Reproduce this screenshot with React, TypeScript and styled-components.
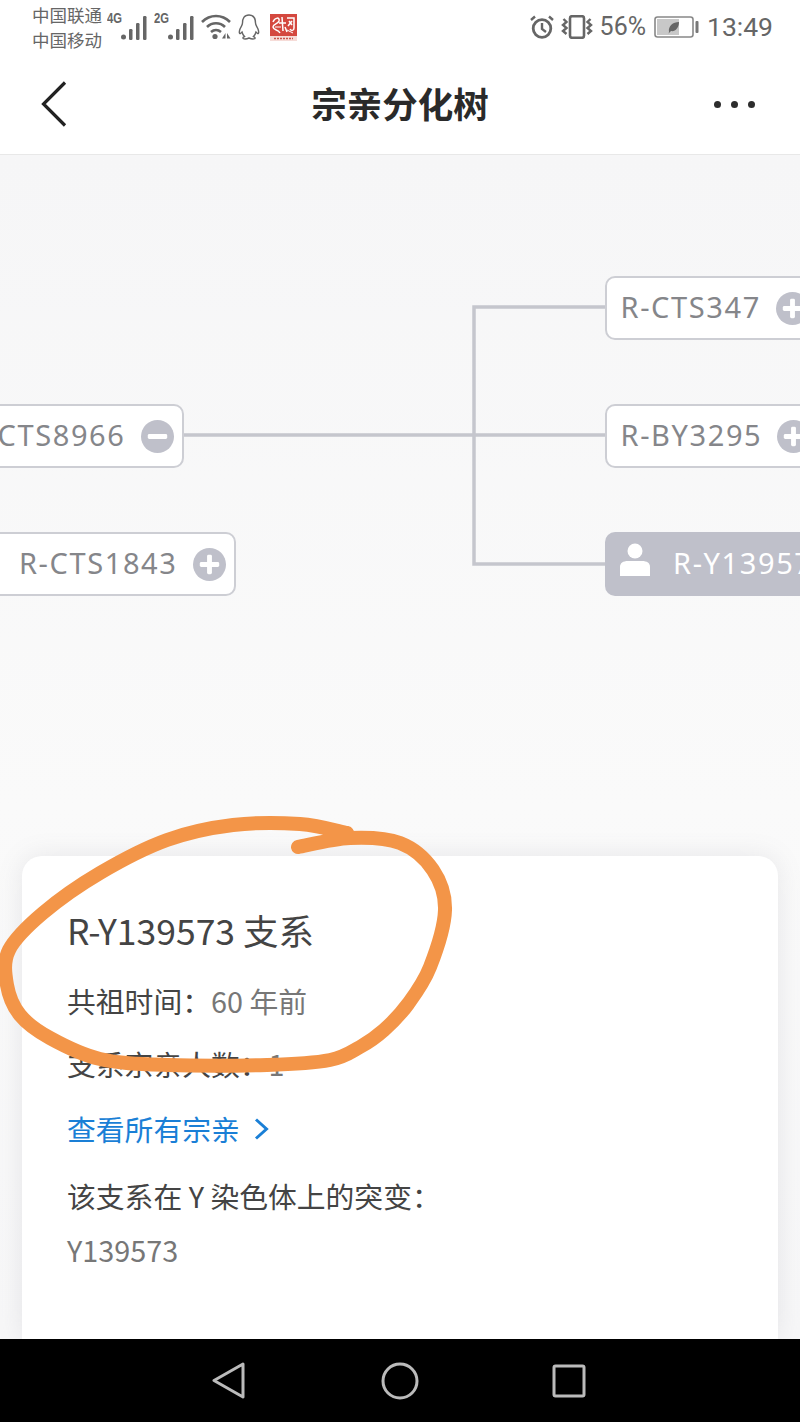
import styled, { createGlobalStyle } from 'styled-components'

const GlobalStyle = createGlobalStyle`
    html, body {
        margin: 0;
        padding: 0;
        background: #fff;
    }
`

const LINE = '#c5c6cd'
const CJK = `"Noto Sans CJK SC", "Noto Sans", sans-serif`

// the hand drawn ring, traced from the start of the stroke round to its end
const RING: [number, number][] = [
    [298, 847], [350, 838], [400, 843], [433, 870], [445, 910], [430, 967], [408, 1004], [384, 1030],
    [360, 1047], [330, 1060], [267, 1065], [167, 1065], [100, 1059], [50, 1038], [20, 1015], [7, 985], [9, 950],
    [43, 913], [100, 873], [167, 840], [233, 825], [300, 824], [347, 833],
]

const smoothPath = (pts: [number, number][]) => {
    let d = `M${pts[0][0]} ${pts[0][1]}`
    for (let i = 0; i < pts.length - 1; i++) {
        const p0 = pts[Math.max(i - 1, 0)]
        const p1 = pts[i]
        const p2 = pts[i + 1]
        const p3 = pts[Math.min(i + 2, pts.length - 1)]
        const c1x = p1[0] + (p2[0] - p0[0]) / 6
        const c1y = p1[1] + (p2[1] - p0[1]) / 6
        const c2x = p2[0] - (p3[0] - p1[0]) / 6
        const c2y = p2[1] - (p3[1] - p1[1]) / 6
        d += ` C${c1x} ${c1y} ${c2x} ${c2y} ${p2[0]} ${p2[1]}`
    }
    return d
}

function Signal({ label }: { label: string }) {
    return (
        <SignalBox>
            <SignalLabel>{label}</SignalLabel>
            <svg width="26" height="25" viewBox="0 0 26 25">
                <circle cx="2.5" cy="22" r="2.5" fill="#666" />
                <rect x="8" y="14" width="3.5" height="11" rx="1.2" fill="#666" />
                <rect x="15" y="8" width="3.5" height="17" rx="1.2" fill="#666" />
                <rect x="22" y="1" width="3.5" height="24" rx="1.2" fill="#666" />
            </svg>
        </SignalBox>
    )
}

function WifiIcon() {
    return (
        <svg width="30" height="26" viewBox="0 0 30 26" fill="none" stroke="#666" strokeWidth="2.6">
            <path d="M1 8 C9 0 21 0 29 8" />
            <path d="M6 13 C11 8 19 8 24 13" />
            <path d="M10 18 C13 15.5 17 15.5 20 18" />
            <circle cx="14" cy="22.5" r="2.6" fill="#666" stroke="none" />
            <path d="M21 24.5 L24.5 19 V24.5 Z" fill="#666" stroke="none" />
            <path d="M26 19 L29.5 24.5 H26 Z" fill="#666" stroke="none" />
        </svg>
    )
}

function QQIcon() {
    return (
        <svg width="22" height="26" viewBox="0 0 22 26" fill="none" stroke="#666" strokeWidth="1.4">
            <path d="M11 1 C6 1 4.5 5 4.5 9 C4.5 11 3 12.5 2 15 C1 18 1 20 2.5 19.5 L4 18 C4.5 20 5.5 21.5 6.5 22.5 C4 23.5 4.5 25 7 25 C9 25 10 24.5 11 24 C12 24.5 13 25 15 25 C17.5 25 18 23.5 15.5 22.5 C16.5 21.5 17.5 20 18 18 L19.5 19.5 C21 20 21 18 20 15 C19 12.5 17.5 11 17.5 9 C17.5 5 16 1 11 1 Z" />
        </svg>
    )
}

function AppLogo() {
    return (
        <svg width="27" height="27" viewBox="0 0 27 27">
            <rect width="27" height="22" fill="#d4483f" />
            <rect y="22" width="27" height="5" fill="#f6dcd8" />
            <g fill="none" stroke="#fff" strokeWidth="1.5">
                <path d="M3 8 C5 3 10 3 9 7 C8 10 3 10 3 13 C4 17 8 15 10 19" />
                <path d="M12 3 L13 17 M9 9 H16 M15 13 L17 18" />
                <path d="M17 4 H24 V14 C24 17 21 17 20 15 M19 7 L22 11 M22 7 L18 12" />
                <path d="M5 13 H11 M17 16 L23 19" strokeWidth="1" />
            </g>
            <path d="M4 24.5 H23" stroke="#c9544c" strokeWidth="1.5" strokeDasharray="2 1" />
        </svg>
    )
}

function AlarmIcon() {
    return (
        <svg width="24" height="24" viewBox="0 0 24 24" fill="none" stroke="#666" strokeWidth="2.8">
            <circle cx="12" cy="13.5" r="8.8" />
            <path d="M12 8 V14 L16 17" strokeWidth="2.4" />
            <path d="M1 5 L5 1.5 M23 5 L19 1.5" strokeWidth="2.4" />
        </svg>
    )
}

function VibrateIcon() {
    return (
        <svg width="32" height="24" viewBox="0 0 32 24" fill="none" stroke="#666" strokeWidth="2.4">
            <rect x="9" y="1.2" width="14" height="21.6" rx="2" strokeWidth="2.6" />
            <path d="M2.5 4 L5.5 7 L2 10 L5.5 13 L2 16 L5.5 19" />
            <path d="M29.5 4 L26.5 7 L30 10 L26.5 13 L30 16 L26.5 19" />
        </svg>
    )
}

function BatteryIcon() {
    return (
        <svg width="45" height="22" viewBox="0 0 45 22">
            <rect x="1" y="1" width="38" height="20" rx="2.5" fill="#fff" stroke="#888" strokeWidth="1.6" />
            <rect x="3" y="3" width="22" height="16" fill="#c8c8c8" />
            <rect x="41.5" y="5" width="3" height="12" rx="1" fill="#777" />
            <path d="M15 16 C14 10 19 6 25 6 C25 12 21 16 17 15 L14.5 17.5 Z" fill="#666" />
        </svg>
    )
}

function CircleButton({ minus }: { minus?: boolean }) {
    return (
        <svg width="33" height="33" viewBox="0 0 34 34">
            <circle cx="17" cy="17" r="17" fill="#bfc0ca" />
            <rect x="7" y="14.5" width="20" height="5" rx="1.5" fill="#fff" />
            {!minus && <rect x="14.5" y="7" width="5" height="20" rx="1.5" fill="#fff" />}
        </svg>
    )
}

const RaisedIcon = styled.svg`
    margin-bottom: 8px;
`

function UserIcon() {
    return (
        <RaisedIcon width="30" height="34" viewBox="0 0 30 34">
            <circle cx="15" cy="8" r="7.5" fill="#fff" />
            <path d="M0 33 V24 C0 20 3 18 8 18 H22 C27 18 30 20 30 24 V33 Z" fill="#fff" />
        </RaisedIcon>
    )
}

export default function App() {
    return (
        <Phone>
            <GlobalStyle />
            <StatusBar>
                <StatusGroup>
                    <Carriers>
                        <span>中国联通</span>
                        <span>中国移动</span>
                    </Carriers>
                    <Signal label="4G" />
                    <Signal label="2G" />
                    <WifiIcon />
                    <QQIcon />
                    <LogoSlot>
                        <AppLogo />
                    </LogoSlot>
                </StatusGroup>
                <StatusGroup>
                    <AlarmIcon />
                    <VibrateIcon />
                    <Percent>56%</Percent>
                    <BatteryIcon />
                    <Clock>13:49</Clock>
                </StatusGroup>
            </StatusBar>

            <Header>
                <svg width="26" height="46" viewBox="0 0 26 46" fill="none" stroke="#222" strokeWidth="3.2">
                    <path d="M24 1.5 L2.5 23 L24 44.5" />
                </svg>
                <Title>宗亲分化树</Title>
                <Dots>
                    <Dot />
                    <Dot />
                    <Dot />
                </Dots>
            </Header>

            <Canvas>
                <Connectors width="800" height="500" viewBox="0 0 800 500" fill="none" stroke={LINE} strokeWidth="3.5">
                    <path d="M605 152 H474 V409 H605" />
                    <path d="M184 280 H605" />
                </Connectors>

                <Node $left={605} $top={121} $width={260}>
                    <NodeText>R-CTS347</NodeText>
                    <CircleButton />
                </Node>
                <Node $left={-120} $top={249} $width={304} $align="end">
                    <NodeText>R-CTS8966</NodeText>
                    <CircleButton minus />
                </Node>
                <Node $left={605} $top={249} $width={260}>
                    <NodeText>R-BY3295</NodeText>
                    <CircleButton />
                </Node>
                <Node $left={-60} $top={377} $width={296} $align="end">
                    <NodeText>R-CTS1843</NodeText>
                    <CircleButton />
                </Node>
                <Node $left={605} $top={377} $width={300} $active>
                    <UserIcon />
                    <NodeText $active>R-Y139573</NodeText>
                </Node>

                <Card>
                    <CardTitle>R-Y139573 支系</CardTitle>
                    <InfoRow $mt={27}>
                        共祖时间：<InfoValue>60 年前</InfoValue>
                    </InfoRow>
                    <InfoRow $mt={21}>
                        支系宗亲人数：<InfoValue>1</InfoValue>
                    </InfoRow>
                    <LinkRow>
                        查看所有宗亲
                        <svg width="15" height="22" viewBox="0 0 15 22" fill="none" stroke="#1a7fd6" strokeWidth="3">
                            <path d="M2 1.5 L12.5 11 L2 20.5" />
                        </svg>
                    </LinkRow>
                    <InfoRow $mt={25}>该支系在 Y 染色体上的突变：</InfoRow>
                    <MutationValue>Y139573</MutationValue>
                </Card>
            </Canvas>

            <NavBar>
                <BackKey width="34" height="37" viewBox="0 0 34 37" fill="none" stroke="#bbb" strokeWidth="3" strokeLinejoin="round">
                    <path d="M31 2 L2 18.5 L31 35 Z" />
                </BackKey>
                <svg width="38" height="38" viewBox="0 0 38 38" fill="none" stroke="#bbb" strokeWidth="3">
                    <circle cx="19" cy="19" r="17" />
                </svg>
                <svg width="34" height="34" viewBox="0 0 34 34" fill="none" stroke="#bbb" strokeWidth="3" strokeLinejoin="round">
                    <rect x="2" y="2" width="30" height="30" rx="1.5" />
                </svg>
            </NavBar>

            <Scribble width="800" height="1422" viewBox="0 0 800 1422" fill="none" stroke="#f39548" strokeWidth="14" strokeLinecap="round" strokeLinejoin="round">
                <path d={smoothPath(RING)} />
            </Scribble>
        </Phone>
    )
}

const Phone = styled.div`
    position: relative;
    display: flex;
    flex-direction: column;
    width: 800px;
    height: 1422px;
    overflow: hidden;
    background: #fff;
    font-family: ${CJK};
`

const StatusBar = styled.div`
    display: flex;
    justify-content: space-between;
    align-items: center;
    height: 54px;
    padding: 0 27px 0 32px;
    color: #666;
`

const StatusGroup = styled.div`
    display: flex;
    align-items: center;
    gap: 7px;
`

const Carriers = styled.div`
    display: flex;
    flex-direction: column;
    gap: 6px;
    margin-right: -2px;
    font-size: 17.5px;
    line-height: 19px;
`

const SignalBox = styled.div`
    position: relative;
    width: 40px;
    height: 26px;
    display: flex;
    justify-content: flex-end;
    align-items: flex-end;
`

const SignalLabel = styled.span`
    position: absolute;
    left: 0;
    top: -4px;
    font-family: 'Liberation Sans', sans-serif;
    font-weight: 700;
    font-size: 15px;
    line-height: 16px;
    transform: scaleX(0.75);
    transform-origin: left center;
`

const LogoSlot = styled.div`
    display: flex;
    margin-left: 3px;
`

const Percent = styled.span`
    font-family: Roboto, sans-serif;
    font-size: 25px;
    line-height: 30px;
    margin-right: 1px;
`

const Clock = styled.span`
    font-family: Roboto, sans-serif;
    font-size: 26.5px;
    line-height: 30px;
    margin-left: 1px;
`

const Header = styled.div`
    display: grid;
    grid-template-columns: 1fr auto 1fr;
    align-items: center;
    height: 101px;
    padding: 0 45px 0 41px;
    border-bottom: 1px solid #e8e8e8;
    box-sizing: border-box;
`

const Title = styled.div`
    font-size: 35.5px;
    line-height: 48px;
    margin-top: -2px;
    font-weight: 700;
    color: #2a2a2a;
    margin-left: 4px;
`

const Dots = styled.div`
    display: flex;
    justify-content: flex-end;
    gap: 10px;
`

const Dot = styled.span`
    width: 7px;
    height: 7px;
    border-radius: 50%;
    background: #2d2d2d;
`

const Canvas = styled.div`
    position: relative;
    flex: 1;
    display: flex;
    flex-direction: column;
    justify-content: flex-end;
    padding: 0 22px;
    overflow: hidden;
    background: linear-gradient(#f6f6f7, #fafafa 55%, #f7f7f8);
`

const Connectors = styled.svg`
    position: absolute;
    left: 0;
    top: 0;
`

const Node = styled.div<{ $left: number; $top: number; $width: number; $active?: boolean; $align?: string }>`
    position: absolute;
    left: ${({ $left }) => $left}px;
    top: ${({ $top }) => $top}px;
    width: ${({ $width }) => $width}px;
    height: 64px;
    box-sizing: border-box;
    display: flex;
    align-items: center;
    justify-content: ${({ $align }) => ($align === 'end' ? 'flex-end' : 'flex-start')};
    gap: ${({ $active }) => ($active ? 23 : 15)}px;
    padding: ${({ $active, $align }) => ($active ? '0 0 0 15px' : $align === 'end' ? '0 8.5px 0 0' : '0 0 0 13.5px')};
    border-radius: 10px;
    border: ${({ $active }) => ($active ? 'none' : '2.5px solid #cdced4')};
    background: ${({ $active }) => ($active ? '#bfc0ca' : '#fff')};
`

const NodeText = styled.span<{ $active?: boolean }>`
    font-family: 'Noto Sans', sans-serif;
    font-size: 29px;
    letter-spacing: 1.6px;
    line-height: 40px;
    margin-bottom: 2px;
    white-space: nowrap;
    color: ${({ $active }) => ($active ? '#fff' : '#85868a')};
`

const Card = styled.div`
    display: flex;
    flex-direction: column;
    height: 483px;
    box-sizing: border-box;
    padding: 51px 45px 0;
    border-radius: 20px 20px 0 0;
    background: #fff;
    box-shadow: 0 0 26px rgba(110, 110, 130, 0.14);
`

const CardTitle = styled.div`
    font-size: 35.5px;
    line-height: 46px;
    color: #444;
`

const InfoRow = styled.div<{ $mt: number }>`
    margin-top: ${({ $mt }) => $mt}px;
    font-size: 28.8px;
    line-height: 42px;
    color: #444;
`

const InfoValue = styled.span`
    color: #777;
`

const LinkRow = styled.div`
    display: flex;
    align-items: center;
    gap: 14px;
    margin-top: 23px;
    font-size: 28.8px;
    line-height: 42px;
    color: #1a7fd6;
`

const MutationValue = styled.div`
    margin-top: 12px;
    font-size: 28.8px;
    line-height: 42px;
    color: #777;
`

const NavBar = styled.div`
    display: flex;
    justify-content: center;
    align-items: center;
    gap: 133px;
    height: 83px;
    padding-right: 2px;
    background: #000;
`

const BackKey = styled.svg`
    margin-right: 2px;
`

const Scribble = styled.svg`
    position: absolute;
    left: 0;
    top: 0;
    pointer-events: none;
`
